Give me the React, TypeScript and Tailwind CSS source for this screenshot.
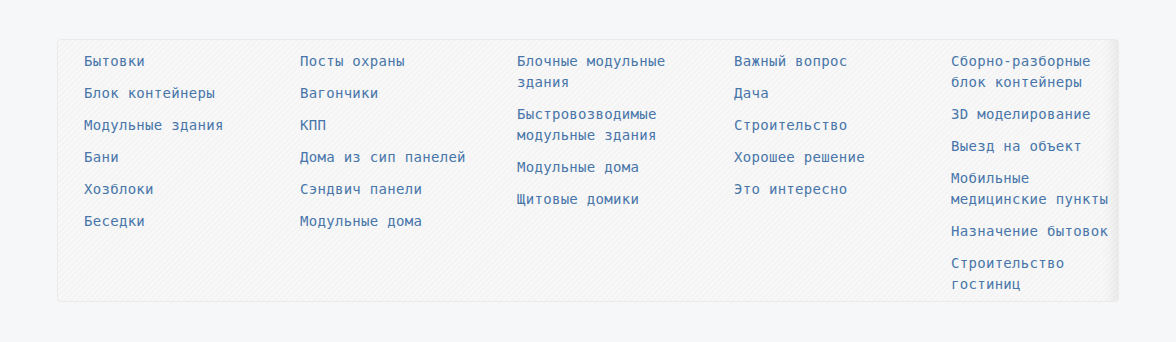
import React from "react";

const columns: string[][] = [
  ["Бытовки", "Блок контейнеры", "Модульные здания", "Бани", "Хозблоки", "Беседки"],
  ["Посты охраны", "Вагончики", "КПП", "Дома из сип панелей", "Сэндвич панели", "Модульные дома"],
  ["Блочные модульные здания", "Быстровозводимые модульные здания", "Модульные дома", "Щитовые домики"],
  ["Важный вопрос", "Дача", "Строительство", "Хорошее решение", "Это интересно"],
  [
    "Сборно-разборные блок контейнеры",
    "3D моделирование",
    "Выезд на объект",
    "Мобильные медицинские пункты",
    "Назначение бытовок",
    "Строительство гостиниц",
  ],
];

const App: React.FC = () => {
  return (
    <div className="min-h-[342px] w-full bg-[#f6f7f9] pt-[39px] pl-[57px]">
      <div className="w-[1062px] h-[263px] rounded-[4px] border border-[#ebebeb] bg-[repeating-linear-gradient(135deg,#f4f4f4_0px,#f4f4f4_2px,#f8f8f8_2px,#f8f8f8_4px)] shadow-[inset_-14px_0_14px_-10px_rgba(0,0,0,0.07)]">
        <div className="grid grid-cols-[216px_217px_217px_217px_1fr] pl-[26px] pt-[11px] font-['DejaVu_Sans_Mono',monospace] text-[14px] leading-[21px] tracking-[0.3px] text-[#4876aa]">
          {columns.map((col, i) => (
            <ul key={i} className="flex flex-col gap-[11px]">
              {col.map((item) => (
                <li key={item} className={i === 2 ? "pr-[40px]" : i === 4 ? "pr-[6px]" : ""}>
                  <a href="#" className="hover:underline">
                    {item}
                  </a>
                </li>
              ))}
            </ul>
          ))}
        </div>
      </div>
    </div>
  );
};

export default App;
